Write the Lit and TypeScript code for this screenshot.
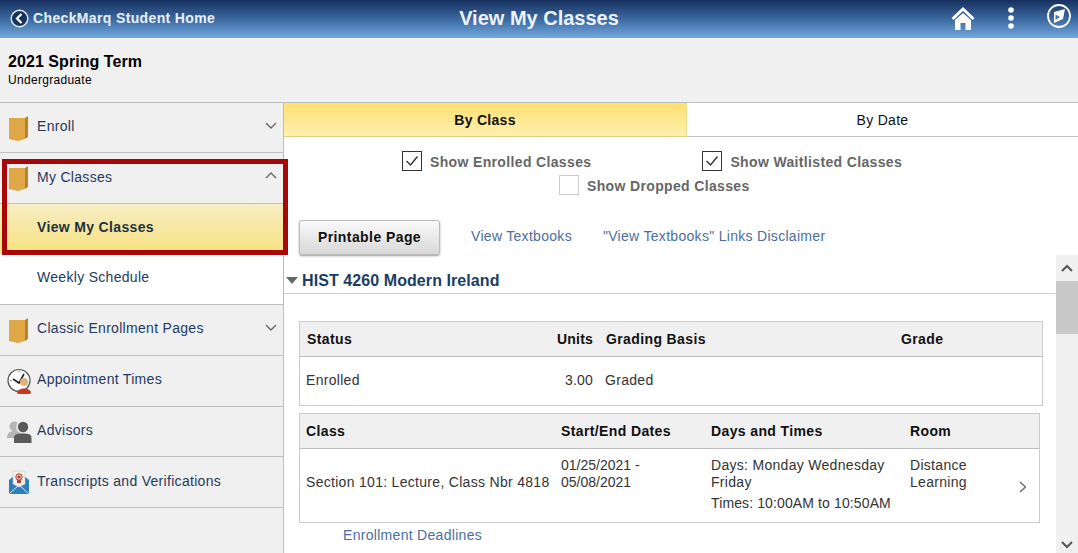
import { LitElement, html, css, svg } from 'lit';
import { customElement } from 'lit/decorators.js';
import { classMap } from 'lit/directives/class-map.js';

type IconName = 'book' | 'clock' | 'people' | 'mail';

interface NavItem {
  label: string;
  icon?: IconName;
  chevron?: 'up' | 'down';
  kind?: 'child' | 'current';
  // a few rows in the source are a pixel shorter than the others
  short?: boolean;
  // and a few labels sit a pixel lower
  low?: boolean;
}

const NAV_ITEMS: NavItem[] = [
  { label: 'Enroll', icon: 'book', chevron: 'down', short: true },
  { label: 'My Classes', icon: 'book', chevron: 'up', low: true },
  { label: 'View My Classes', kind: 'current' },
  { label: 'Weekly Schedule', kind: 'child' },
  { label: 'Classic Enrollment Pages', icon: 'book', chevron: 'down' },
  { label: 'Appointment Times', icon: 'clock' },
  { label: 'Advisors', icon: 'people', short: true },
  { label: 'Transcripts and Verifications', icon: 'mail', low: true },
];

const ICONS: Record<IconName, unknown> = {
  book: svg`
    <path d="M2 3 H18 V24 L11 26 L2 24 Z" fill="#dfa745"/>
    <path d="M18 3 L21 1 V22 L18 24 Z" fill="#b98328"/>`,
  clock: svg`
    <circle cx="12" cy="12.5" r="11" fill="#fff" stroke="#555" stroke-width="1.2"/>
    <path d="M6 11 L12 15 L17 6" fill="none" stroke="#222" stroke-width="1.6"/>
    <path d="M12 3v1.5M3 12.5h1.5" stroke="#777"/>
    <circle cx="17" cy="14" r="4" fill="#e2b27a"/>
    <path d="M10 25 C10 19 24 19 24 25 C24 27 10 27 10 25 Z" fill="#c23a22"/>`,
  people: svg`
    <circle cx="7.5" cy="7.5" r="5" fill="#b5b5b5"/>
    <path d="M0 19 C0 13 4 12 8 12 L14 12 L14 19 Z" fill="#b5b5b5"/>
    <circle cx="16" cy="8" r="6.8" fill="#f0f0f0"/>
    <circle cx="16" cy="8" r="5.2" fill="#5a5a5a"/>
    <path d="M7 24 L7 19 C7 15 11 14.5 16 14.5 C21 14.5 24.5 15 24.5 19 L24.5 24 Z" fill="#5a5a5a"/>`,
  mail: svg`
    <path d="M2 11 L12 3 L22 11 L22 25 L2 25 Z" fill="#2d7fb8"/>
    <path d="M6 2 L18 2 L18 15 L12 18 L6 15 Z" fill="#f5f1ea" stroke="#c9c9c9" stroke-width=".6"/>
    <circle cx="12" cy="8" r="3.2" fill="#e8b7a8" stroke="#b5402c"/>
    <circle cx="12" cy="8" r="1.2" fill="#a32a1c"/>
    <path d="M10 11h4v3h-4z" fill="#b5402c"/>
    <path d="M2 25 L12 16 L22 25" fill="none" stroke="#d8eaf5" stroke-width="1"/>`,
};

@customElement('side-nav')
export class SideNav extends LitElement {
  static styles = css`
    :host {
      display: block;
      width: 283px;
      flex: none;
      background: #f0f0f0;
      border-right: 1px solid #bdbdbd;
      position: relative;
    }

    .row {
      height: 50px;
      border-bottom: 1px solid #bfbfbf;
      display: flex;
      align-items: center;
      padding-left: 37px;
      position: relative;
      font-size: 14px;
      color: #1f3a5f;
    }

    .row.short {
      height: 49px;
    }

    .row span {
      position: relative;
      top: -2px;
    }

    .row.low span {
      top: -1px;
    }

    .row svg.icon {
      position: absolute;
      left: 7px;
      top: 12px;
    }

    .chev {
      position: absolute;
      right: 5px;
      top: 17px;
    }

    .child {
      background: #fff;
    }

    .current {
      border-bottom: none;
      background: linear-gradient(#f6edc4, #f8e27e);
      font-weight: bold;
      letter-spacing: 0.34px;
      color: #1d3240;
    }

    .marker {
      position: absolute;
      left: 2px;
      top: 56px;
      width: 286px;
      height: 96px;
      box-sizing: border-box;
      border: 5px solid #a70707;
      pointer-events: none;
    }
  `;

  render() {
    return html`
      ${NAV_ITEMS.map(
        (item) => html`
          <div
            class=${classMap({
              row: true,
              short: !!item.short,
              low: !!item.low,
              child: item.kind === 'child',
              current: item.kind === 'current',
            })}
          >
            ${item.icon
              ? html`<svg class="icon" width="26" height="26" viewBox="0 0 26 26">${ICONS[item.icon]}</svg>`
              : ''}
            <span>${item.label}</span>
            ${item.chevron
              ? html`<svg class="chev" width="14" height="10" viewBox="0 0 14 10">
                  <path
                    d=${item.chevron === 'up' ? 'M2 8 L7 3 L12 8' : 'M2 3 L7 8 L12 3'}
                    fill="none"
                    stroke="#666"
                    stroke-width="1.4"
                  />
                </svg>`
              : ''}
          </div>
        `
      )}
      <div class="marker"></div>
    `;
  }
}

@customElement('app-root')
export class AppRoot extends LitElement {
  static styles = css`
    :host {
      display: flex;
      flex-direction: column;
      width: 1078px;
      height: 553px;
      overflow: hidden;
      background: #fff;
      font-family: 'Liberation Sans', Arial, sans-serif;
      font-size: 14px;
      letter-spacing: 0.3px;
      color: #333;
    }

    /* banner */
    .banner {
      height: 38px;
      flex: none;
      box-sizing: border-box;
      padding-bottom: 2px;
      display: grid;
      grid-template-columns: 1fr auto 1fr;
      align-items: center;
      background: linear-gradient(#17305f, #3f6ea6 55%, #74a9e0);
      color: #fff;
    }

    .back {
      display: flex;
      align-items: center;
      gap: 4px;
      padding-left: 10px;
      font-weight: bold;
      font-size: 14px;
      letter-spacing: 0.36px;
      color: #e8f0f8;
    }

    .title {
      font-size: 20px;
      font-weight: bold;
      letter-spacing: 0;
      color: #eef3f9;
    }

    .actions {
      justify-self: end;
      display: flex;
      align-items: center;
      gap: 29px;
      padding-right: 6px;
    }

    .actions .compass {
      margin-bottom: 4px;
    }

    .term {
      height: 65px;
      flex: none;
      box-sizing: border-box;
      background: #f0f0f0;
      border-bottom: 1px solid #bdbdbd;
      padding: 15px 8px 0;
      color: #000;
    }

    .term b {
      display: block;
      font-size: 16px;
      line-height: 18px;
      letter-spacing: 0.06px;
    }

    .term small {
      display: block;
      font-size: 12px;
      line-height: 16px;
      margin-top: 1px;
    }

    .body {
      flex: 1;
      display: flex;
      min-height: 0;
    }

    .main {
      flex: 1;
      display: flex;
      flex-direction: column;
      min-width: 0;
    }

    /* tabs */
    .tabs {
      display: grid;
      grid-template-columns: 403px 1fr;
      grid-template-rows: 34px;
      height: 34px;
      flex: none;
      text-align: center;
    }

    .tab {
      box-sizing: border-box;
      height: 34px;
      padding-top: 1px;
      line-height: 33px;
      border-bottom: 1px solid #c4c4c4;
      color: #111;
    }

    .tab.on {
      font-weight: bold;
      background: linear-gradient(#ffdf70, #fdf0b0);
      border-bottom-color: #e0cf80;
      border-right: 1px solid #e8d88a;
    }

    /* filters */
    .filters {
      height: 50px;
      flex: none;
      padding-top: 12px;
      box-sizing: border-box;
      color: #666;
      font-weight: bold;
      letter-spacing: 0.35px;
    }

    .filter-row {
      display: flex;
      height: 24px;
      align-items: center;
    }

    .filter-row.one {
      padding-left: 118px;
      gap: 111px;
    }

    .filter-row.two {
      padding-left: 275px;
    }

    .check {
      display: flex;
      align-items: center;
      gap: 8px;
    }

    .check .text {
      position: relative;
      top: 1px;
    }

    .box {
      width: 18px;
      height: 18px;
      border: 1px solid #333;
      display: block;
      background: #fff;
    }

    .box.empty {
      border-color: #ccc;
    }

    /* toolbar */
    .toolbar {
      height: 35px;
      flex: none;
      display: flex;
      align-items: center;
      padding-left: 15px;
      margin-top: 33px;
    }

    .button {
      width: 141px;
      height: 35px;
      box-sizing: border-box;
      border: 1px solid #bbb;
      border-radius: 3px;
      background: linear-gradient(#fafafa, #d8d8d8);
      box-shadow: 0 1px 2px #999;
      font-weight: bold;
      letter-spacing: 0.42px;
      color: #111;
      text-align: center;
      line-height: 33px;
      margin-right: 31px;
    }

    a {
      color: #4a6ea0;
      text-decoration: none;
    }

    .toolbar a {
      margin-right: 31px;
      position: relative;
      top: -2px;
    }

    /* scrolling part */
    .scroll-area {
      flex: 1;
      display: flex;
      min-height: 0;
    }

    .content {
      flex: 1;
      min-width: 0;
    }

    .scrollbar {
      width: 22px;
      margin-left: 1px;
      flex: none;
      background: #f0f0f0;
      display: flex;
      flex-direction: column;
      align-items: center;
    }

    .scrollbar .up {
      height: 26px;
      display: flex;
      align-items: center;
    }

    .scrollbar .thumb {
      width: 100%;
      height: 53px;
      background: #c8c8c8;
    }

    .scrollbar .down {
      margin-top: auto;
      height: 16px;
    }

    .heading {
      height: 39px;
      box-sizing: border-box;
      border-bottom: 1px solid #ccc;
      padding: 13px 0 0 2px;
      display: flex;
      align-items: center;
      gap: 4px;
      font-size: 16px;
      font-weight: bold;
      letter-spacing: 0.08px;
      color: #1a3d66;
    }

    .grid {
      box-sizing: border-box;
      border: 1px solid #ccc;
      margin-left: 15px;
    }

    .grid.status {
      width: 744px;
      margin-top: 27px;
    }

    .grid.meeting {
      width: 741px;
      margin-top: 7px;
      position: relative;
    }

    .grid .head,
    .grid .line {
      display: grid;
    }

    .grid .head {
      height: 35px;
      box-sizing: border-box;
      align-items: center;
      background: #f0f0f0;
      border-bottom: 1px solid #bdbdbd;
      font-weight: bold;
      letter-spacing: 0.38px;
      color: #111;
    }

    .status .head {
      grid-template-columns: 242px 44px 308px 1fr;
      padding-left: 7px;
      padding-bottom: 1px;
    }

    .status .line {
      grid-template-columns: 243px 44px 308px 1fr;
      padding-left: 6px;
      padding-bottom: 2px;
      box-sizing: border-box;
      height: 48px;
      align-items: center;
    }

    .units {
      text-align: right;
      letter-spacing: 0.2px;
    }

    .status .head .gutter {
      padding-left: 13px;
    }

    .status .line .gutter {
      padding-left: 12px;
    }

    .meeting .head,
    .meeting .line {
      grid-template-columns: 255px 150px 199px 1fr;
      padding-left: 6px;
    }

    .meeting .line {
      height: 73px;
      line-height: 17px;
      align-items: start;
      padding-top: 8px;
      box-sizing: border-box;
    }

    .meeting .line .section {
      align-self: center;
      padding-bottom: 15px;
      white-space: nowrap;
    }

    .meeting .line .dates {
      letter-spacing: 0;
    }

    .meeting .line p {
      margin: 0;
    }

    .meeting .line p + p {
      margin-top: 4px;
      letter-spacing: 0.12px;
    }

    .meeting .go {
      position: absolute;
      right: 11px;
      top: 66px;
    }

    .deadlines {
      display: block;
      margin: 4px 0 0 59px;
      line-height: 17px;
    }
  `;

  render() {
    return html`
      <div class="banner">
        <div class="back">
          <svg width="19" height="19" viewBox="0 0 19 19">
            <circle cx="9.5" cy="9.5" r="8.3" fill="#16325f" stroke="#e8f0f8" stroke-width="1.4" />
            <path d="M11.5 5 L7 9.5 L11.5 14" fill="none" stroke="#fff" stroke-width="2.2" />
          </svg>
          <span>CheckMarq Student Home</span>
        </div>
        <div class="title">View My Classes</div>
        <div class="actions">
          <svg width="26" height="26" viewBox="0 0 26 26">
            <path d="M1.5 13 L13 2 L24.5 13 L22.5 15 L13 6 L3.5 15 Z" fill="#fff" />
            <path d="M5 15 L13 8 L21 15 L21 25 L15.5 25 L15.5 18 L10.5 18 L10.5 25 L5 25 Z" fill="#fff" />
          </svg>
          <svg width="12" height="26" viewBox="0 0 12 26">
            <circle cx="6" cy="5" r="2.8" fill="#fff" />
            <circle cx="6" cy="13" r="2.8" fill="#fff" />
            <circle cx="6" cy="21" r="2.8" fill="#fff" />
          </svg>
          <svg class="compass" width="26" height="26" viewBox="0 0 26 26">
            <circle cx="13" cy="13" r="11" fill="none" stroke="#fff" stroke-width="1.8" />
            <path d="M8 9 L19 6 L17 16 L8 20 Z" fill="#fff" />
            <path d="M9.5 11.5 L14 14 L9.5 17 Z" fill="#4a77ad" />
          </svg>
        </div>
      </div>

      <div class="term">
        <b>2021 Spring Term</b>
        <small>Undergraduate</small>
      </div>

      <div class="body">
        <side-nav></side-nav>
        <div class="main">
          <div class="tabs">
            <div class="tab on">By Class</div>
            <div class="tab">By Date</div>
          </div>

          <div class="filters">
            <div class="filter-row one">
              ${this.renderCheck('Show Enrolled Classes', true)}
              ${this.renderCheck('Show Waitlisted Classes', true)}
            </div>
            <div class="filter-row two">${this.renderCheck('Show Dropped Classes', false)}</div>
          </div>

          <div class="toolbar">
            <div class="button">Printable Page</div>
            <a>View Textbooks</a>
            <a>"View Textbooks" Links Disclaimer</a>
          </div>

          <div class="scroll-area">
            <div class="content">
              <div class="heading">
                <svg width="12" height="7" viewBox="0 0 12 7"><path d="M0 0 H12 L6 7 Z" fill="#666" /></svg>
                HIST 4260 Modern Ireland
              </div>

              <div class="grid status">
                <div class="head">
                  <div>Status</div>
                  <div class="units">Units</div>
                  <div class="gutter">Grading Basis</div>
                  <div>Grade</div>
                </div>
                <div class="line">
                  <div>Enrolled</div>
                  <div class="units">3.00</div>
                  <div class="gutter">Graded</div>
                  <div></div>
                </div>
              </div>

              <div class="grid meeting">
                <div class="head">
                  <div>Class</div>
                  <div>Start/End Dates</div>
                  <div>Days and Times</div>
                  <div>Room</div>
                </div>
                <div class="line">
                  <div class="section">Section 101: Lecture, Class Nbr 4818</div>
                  <div class="dates">01/25/2021 -<br />05/08/2021</div>
                  <div>
                    <p>Days: Monday Wednesday Friday</p>
                    <p>Times: 10:00AM to 10:50AM</p>
                  </div>
                  <div>Distance<br />Learning</div>
                </div>
                <svg class="go" width="10" height="14" viewBox="0 0 10 14">
                  <path d="M2 2 L7.5 7 L2 12" fill="none" stroke="#666" stroke-width="1.3" />
                </svg>
              </div>

              <a class="deadlines">Enrollment Deadlines</a>
            </div>

            <div class="scrollbar">
              <div class="up">
                <svg width="14" height="10" viewBox="0 0 14 10">
                  <path d="M2 8 L7 3 L12 8" fill="none" stroke="#555" stroke-width="2" />
                </svg>
              </div>
              <div class="thumb"></div>
              <div class="down">
                <svg width="14" height="10" viewBox="0 0 14 10">
                  <path d="M2 2 L7 7 L12 2" fill="none" stroke="#555" stroke-width="2" />
                </svg>
              </div>
            </div>
          </div>
        </div>
      </div>
    `;
  }

  private renderCheck(label: string, checked: boolean) {
    return html`
      <div class="check">
        <span class="box ${checked ? '' : 'empty'}">
          ${checked
            ? html`<svg width="18" height="18" viewBox="0 0 18 18">
                <path d="M3.5 9 L7.5 13 L14.5 4.5" fill="none" stroke="#333" stroke-width="1.4" />
              </svg>`
            : ''}
        </span>
        <span class="text">${label}</span>
      </div>
    `;
  }
}

declare global {
  interface HTMLElementTagNameMap {
    'app-root': AppRoot;
    'side-nav': SideNav;
  }
}
